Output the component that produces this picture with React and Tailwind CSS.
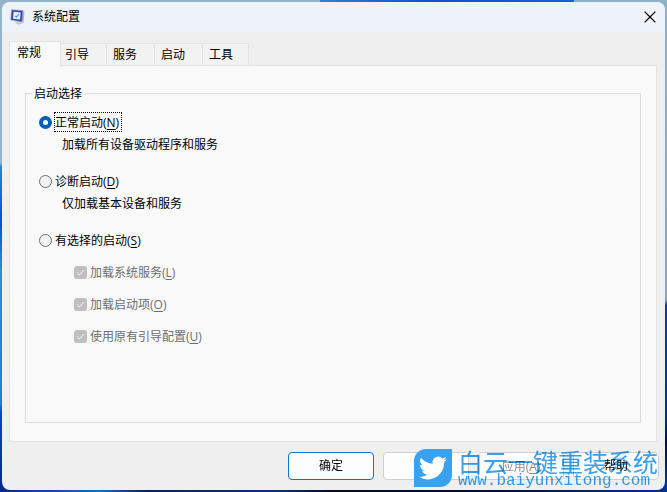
import { X } from 'lucide-react'
import clsx from 'clsx'

const tabs = ['常规', '引导', '服务', '启动', '工具']

const servicios = [
  { label: '加载系统服务', tecla: 'L' },
  { label: '加载启动项', tecla: 'O' },
  { label: '使用原有引导配置', tecla: 'U' },
]

//texto con la tecla de acceso subrayada entre paréntesis
function Etiqueta({ children, tecla }) {
  return (
    <span className="inline-block pt-0.5">
      {children}(<span className="underline underline-offset-2">{tecla}</span>)
    </span>
  )
}

function Opcion({ label, tecla, detalle, checked }) {
  return (
    <div>
      <label className="flex h-5 items-center gap-0.5">
        <input
          type="radio"
          name="inicio"
          defaultChecked={checked}
          className="size-[13px] appearance-none rounded-full border border-[#6e6e6e] bg-[#f3f3f3] checked:border-4 checked:border-[#005fb8] checked:bg-white"
        />
        <span className={clsx('flex h-5 items-center border border-dotted pr-0.5', checked ? 'border-black' : 'border-transparent')}>
          <Etiqueta tecla={tecla}>{label}</Etiqueta>
        </span>
      </label>
      {detalle && <p className="mt-[5px] ml-[23px]">{detalle}</p>}
    </div>
  )
}

function Casilla({ label, tecla }) {
  return (
    <label className="flex h-4 items-center gap-[3px] text-[#6d6d6d]">
      <span className="grid size-[13px] place-items-center">
        <input
          type="checkbox"
          defaultChecked
          disabled
          className="col-start-1 row-start-1 size-[13px] appearance-none rounded-[3px] bg-[#bfbfbf]"
        />
        <svg viewBox="0 0 13 13" className="col-start-1 row-start-1 size-[13px]" fill="none" stroke="#fff" strokeWidth="1">
          <path d="M3.2 6.6l2.3 2.3 4.5-4.6" />
        </svg>
      </span>
      <Etiqueta tecla={tecla}>{label}</Etiqueta>
    </label>
  )
}

function Boton({ children, principal, ...props }) {
  return (
    <button
      type="button"
      className={clsx(
        'h-7 w-[86px] rounded border bg-[#fdfdfd] disabled:text-[#8a8a8a]',
        principal ? 'border-[#0078d4]' : 'border-[#d0d0d0]'
      )}
      {...props}
    >
      {children}
    </button>
  )
}

function IconoEquipo() {
  return (
    <svg viewBox="0 0 16 16" className="size-4">
      <path d="M4 13.200l4-1 5 .3 1.500 1.300-6 2z" fill="#c9cbca" />
      <path d="M12.500 1.500l2 .8-.8 10.200-2.300 1z" fill="#b4b6bb" />
      <path d="M1.500.8l11.300.8-.8 11.200L.8 11z" fill="#3a43b0" stroke="#9a9cb8" strokeWidth=".7" />
      <path d="M3.600 2.800l7 .6-.5 7.200-7-.9z" fill="#e8f6fd" />
      <path d="M5 6.800l1.500 1.400 2.600-3.400" fill="none" stroke="#3c9fd8" strokeWidth="1.100" />
    </svg>
  )
}

function Marca() {
  return (
    <div className="pointer-events-none absolute right-[7px] bottom-0.5 flex h-10 items-center gap-1.5 text-[#38a1f0]">
      <span className="flex size-[38px] items-center justify-center rounded-tl-xl rounded-br-xl bg-[#38a1f0]">
        <svg viewBox="0 0 24 24" className="size-7" fill="#fff">
          <path d="M23.953 4.570a10 10 0 01-2.825.775 4.958 4.958 0 002.163-2.723c-.951.555-2.005.959-3.127 1.184a4.920 4.920 0 00-8.384 4.482C7.690 8.095 4.067 6.130 1.640 3.162a4.822 4.822 0 00-.666 2.475c0 1.710.870 3.213 2.188 4.096a4.904 4.904 0 01-2.228-.616v.060a4.923 4.923 0 003.946 4.827 4.996 4.996 0 01-2.212.085 4.936 4.936 0 004.604 3.417 9.867 9.867 0 01-6.102 2.105c-.390 0-.779-.023-1.170-.067a13.995 13.995 0 007.557 2.209c9.053 0 13.998-7.496 13.998-13.985 0-.210 0-.420-.015-.630A9.935 9.935 0 0024 4.590z" />
        </svg>
      </span>
      <div className="flex w-[200px] flex-col mix-blend-multiply">
        <span className="text-[25px] leading-[26px] whitespace-nowrap">白云一键重装系统</span>
        <span className="font-['Liberation_Mono',monospace] text-base leading-3">www.baiyunxitong.com</span>
      </div>
    </div>
  )
}

export default function App() {
  return (
    <div className="flex min-h-screen flex-col bg-[linear-gradient(90deg,#94b3ca_48%,#1f86e0_48%,#0a50d8_65%,#0f62e0_86%,#8fb1c8_86%),linear-gradient(90deg,#04298a,#1b6fae_15%,#061f66_22%,#0b2f78_42%,#020a20_50%,#04123a_75%,#02308c),linear-gradient(#96b5cb_33%,#1f86d8_34%,#0b50cc_45%,#2a90d0_55%,#1f80d0_82%,#0a45c0_84%,#04298a),linear-gradient(#8fb0c8,#8aa2b8_61%,#0a3d9c_62%,#062f86_85%,#02103a_90%,#0638a0)] bg-[size:100%_2px,100%_2px,50%_100%,50%_100%] bg-[position:top,bottom,left,right] bg-no-repeat p-0.5 font-['Open_Sans','Noto_Sans_CJK_SC',sans-serif] text-xs leading-4 text-black">
      <div className="flex flex-1 flex-col overflow-hidden rounded-lg bg-[#efefef]">
        <header className="flex h-[30px] items-center gap-1.5 bg-[#eef3f9] pr-[5px] pl-2">
          <IconoEquipo />
          <h1 className="flex-1">系统配置</h1>
          <button type="button" aria-label="关闭">
            <X size={20} strokeWidth={1.3} />
          </button>
        </header>

        <main className="flex flex-1 flex-col pt-[9px]">
          <nav role="tablist" className="flex h-6 items-end pl-[7px]">
            {tabs.map((tab, i) => (
              <button
                key={tab}
                type="button"
                role="tab"
                aria-selected={i === 0}
                className={clsx(
                  'border-t border-r border-[#e2e2e2] text-left',
                  i === 0
                    ? 'relative -mb-px h-[25px] w-[52px] border-l bg-[#f9f9f9] pb-0.5 pl-[7px]'
                    : 'h-[22px] bg-[#f2f2f2]',
                  i === 1 && 'w-[46px] pl-1',
                  i > 1 && 'w-12 pl-1.5 last:w-[46px]'
                )}
              >
                {tab}
              </button>
            ))}
          </nav>

          <section role="tabpanel" className="mr-2 ml-[7px] flex flex-1 flex-col border border-[#e2e2e2] bg-[#f9f9f9] px-[15px] py-[18px]">
            <fieldset className="flex-1 border border-[#dcdcdc] px-[13px] pb-4">
              <legend className="-ml-[7px] px-0.5 pt-0.5">启动选择</legend>
              <div className="flex flex-col gap-[18px] pt-2.5">
                <Opcion label="正常启动" tecla="N" detalle="加载所有设备驱动程序和服务" checked />
                <Opcion label="诊断启动" tecla="D" detalle="仅加载基本设备和服务" />
                <Opcion label="有选择的启动" tecla="S" />
              </div>
              <div className="mt-3.5 ml-[35px] flex flex-col gap-4">
                {servicios.map((s) => (
                  <Casilla key={s.tecla} {...s} />
                ))}
              </div>
            </fieldset>
          </section>

          <footer className="relative flex h-12 items-center justify-end gap-[9px] pr-1.5">
            <Boton principal>确定</Boton>
            <Boton aria-label="取消" />
            <Boton disabled>
              <Etiqueta tecla="A">应用</Etiqueta>
            </Boton>
            <Boton>帮助</Boton>
            <Marca />
          </footer>
        </main>
      </div>
    </div>
  )
}
